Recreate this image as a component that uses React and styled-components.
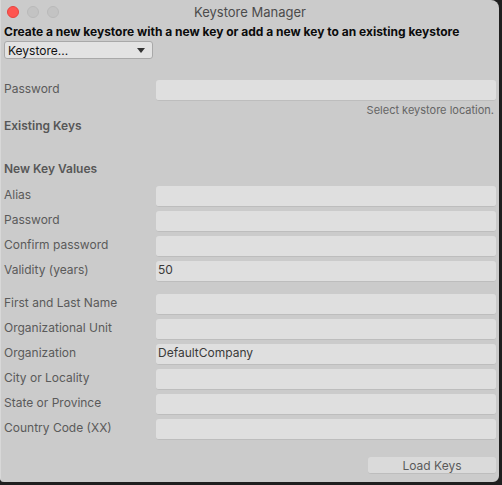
import React from "react";
import styled, { createGlobalStyle } from "styled-components";

const Global = createGlobalStyle`
  html, body { margin: 0; padding: 0; background: #1f1f1f; }
  body { font-family: Inter, "Noto Sans", sans-serif; }
  * { box-sizing: border-box; }
`;

const Window = styled.div`
  width: 499px;
  height: 482px;
  background: #cbcbcb;
  border-radius: 0 8px 6px 4px;
  border-left: 1px solid #d8d8d8;
  display: flex;
  flex-direction: column;
  overflow: hidden;
`;

const TitleBar = styled.div`
  height: 23px;
  position: relative;
  display: flex;
  align-items: center;
  justify-content: center;
  flex-shrink: 0;
`;

const Lights = styled.div`
  position: absolute;
  left: 6px;
  top: 6px;
  display: flex;
  gap: 8px;
`;

const Light = styled.span`
  width: 12px;
  height: 12px;
  border-radius: 50%;
  background: ${(p) => (p.$red ? "#fe5550" : "#c3c3c3")};
  border: 1px solid ${(p) => (p.$red ? "#e5443f" : "#b9b9b9")};
`;

const Title = styled.div`
  font-size: 13px;
  color: #4b4b4b;
  padding-top: 1px;
`;

const Content = styled.div`
  padding: 0 3px;
  display: flex;
  flex-direction: column;
  flex: 1;
`;

const Heading = styled.div`
  font-size: 12px;
  font-weight: 700;
  color: #0c0c0c;
  height: 18px;
  line-height: 18px;
`;

const Dropdown = styled.div`
  width: 149px;
  height: 18px;
  background: #e3e3e3;
  border: 1px solid #a9a9a9;
  border-radius: 3px;
  display: flex;
  align-items: center;
  justify-content: space-between;
  padding: 0 7px 0 3px;
  font-size: 12px;
  color: #111;
`;

const Caret = styled.span`
  width: 0;
  height: 0;
  border-left: 4px solid transparent;
  border-right: 4px solid transparent;
  border-top: 5px solid #333;
`;

const Row = styled.div`
  display: grid;
  grid-template-columns: 152px 1fr;
  align-items: start;
  height: 21px;
  margin-top: ${(p) => p.$mt || 4}px;
`;

const Label = styled.div`
  font-size: 12px;
  line-height: 17px;
  color: #5a5a5a;
`;

const Field = styled.div`
  height: 21px;
  background: #dfdfdf;
  border-radius: 3px;
  border-bottom: 1px solid #bdbdbd;
  font-size: 12px;
  color: #3a3a3a;
  line-height: 17px;
  padding-left: 2px;
`;

const Hint = styled.div`
  font-size: 11px;
  color: #656565;
  text-align: right;
  padding-right: 2px;
  height: 16px;
  line-height: 16px;
  margin-top: 1px;
`;

const Section = styled.div`
  font-size: 12px;
  font-weight: 600;
  color: #575757;
  height: 16px;
  line-height: 16px;
  margin-top: ${(p) => p.$mt}px;
`;

const Footer = styled.div`
  display: flex;
  justify-content: flex-end;
  margin-top: 17px;
`;

const Button = styled.div`
  width: 128px;
  height: 17px;
  background: #dadada;
  border-radius: 3px;
  border-bottom: 1px solid #bdbdbd;
  font-size: 12px;
  color: #5a5a5a;
  display: flex;
  align-items: center;
  justify-content: center;
`;

const groupA = [
  ["Alias", ""],
  ["Password", ""],
  ["Confirm password", ""],
  ["Validity (years)", "50"],
];
const groupB = [
  ["First and Last Name", ""],
  ["Organizational Unit", ""],
  ["Organization", "DefaultCompany"],
  ["City or Locality", ""],
  ["State or Province", ""],
  ["Country Code (XX)", ""],
];

export default function App() {
  return (
    <>
      <Global />
      <Window>
        <TitleBar>
          <Lights>
            <Light $red />
            <Light />
            <Light />
          </Lights>
          <Title>Keystore Manager</Title>
        </TitleBar>
        <Content>
          <Heading>Create a new keystore with a new key or add a new key to an existing keystore</Heading>
          <Dropdown>
            <span>Keystore...</span>
            <Caret />
          </Dropdown>
          <Row $mt={21}>
            <Label>Password</Label>
            <Field />
          </Row>
          <Hint>Select keystore location.</Hint>
          <Section $mt={0}>Existing Keys</Section>
          <Section $mt={27}>New Key Values</Section>
          {groupA.map(([l, v], i) => (
            <Row key={l} $mt={i === 0 ? 9 : 4}>
              <Label>{l}</Label>
              <Field>{v}</Field>
            </Row>
          ))}
          {groupB.map(([l, v], i) => (
            <Row key={l} $mt={i === 0 ? 12 : 4}>
              <Label>{l}</Label>
              <Field>{v}</Field>
            </Row>
          ))}
          <Footer>
            <Button>Load Keys</Button>
          </Footer>
        </Content>
      </Window>
    </>
  );
}
